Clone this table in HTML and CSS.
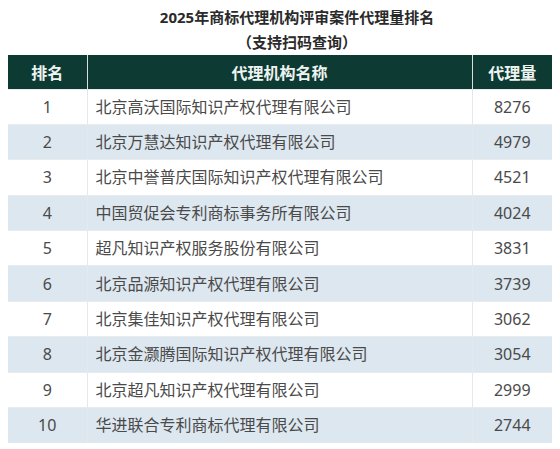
FILE: index.html
```html
<!DOCTYPE html>
<html lang="zh-CN">
<head>
<meta charset="UTF-8" />
<meta name="viewport" content="width=device-width, initial-scale=1" />
<title>2025年商标代理机构评审案件代理量排名</title>
<link rel="stylesheet" href="styles.css">
</head>
<body>

<div class="title">
  <div>2025年商标代理机构评审案件代理量排名</div>
  <div>（支持扫码查询）</div>
</div>

<table class="rank">
  <thead>
    <tr><th class="no">排名</th><th>代理机构名称</th><th class="num">代理量</th></tr>
  </thead>
  <tbody>
    <tr><td class="no">1</td><td class="name">北京高沃国际知识产权代理有限公司</td><td class="num">8276</td></tr>
    <tr><td class="no">2</td><td class="name">北京万慧达知识产权代理有限公司</td><td class="num">4979</td></tr>
    <tr><td class="no">3</td><td class="name">北京中誉普庆国际知识产权代理有限公司</td><td class="num">4521</td></tr>
    <tr><td class="no">4</td><td class="name">中国贸促会专利商标事务所有限公司</td><td class="num">4024</td></tr>
    <tr><td class="no">5</td><td class="name">超凡知识产权服务股份有限公司</td><td class="num">3831</td></tr>
    <tr><td class="no">6</td><td class="name">北京品源知识产权代理有限公司</td><td class="num">3739</td></tr>
    <tr><td class="no">7</td><td class="name">北京集佳知识产权代理有限公司</td><td class="num">3062</td></tr>
    <tr><td class="no">8</td><td class="name">北京金灏腾国际知识产权代理有限公司</td><td class="num">3054</td></tr>
    <tr><td class="no">9</td><td class="name">北京超凡知识产权代理有限公司</td><td class="num">2999</td></tr>
    <tr><td class="no">10</td><td class="name">华进联合专利商标代理有限公司</td><td class="num">2744</td></tr>
  </tbody>
</table>

</body>
</html>
```

FILE: styles.css
```css
body {
  margin: 0;
  padding: 5px 8px 0;
  background: #fff;
  font-family: "Noto Sans", "Noto Sans CJK SC", sans-serif;
  color: #4a4a4a;
}
.title {
  text-align: center;
  padding-left: 34px;
  font-size: 15px;
  font-weight: bold;
  line-height: 25px;
  color: #2a2a2a;
}
.rank {
  width: 544px;
  border-collapse: collapse;
  font-size: 16px;
}
.rank th {
  box-sizing: border-box;
  background: #0d3b33;
  color: #eef3f0;
  font-weight: 600;
  height: 34px;
  padding: 0;
  border-left: 1px solid #d8e0dc;
}
.rank th:first-child {
  border-left: none;
}
.rank td {
  box-sizing: border-box;
  height: 35.4px;
  padding: 0;
  line-height: 20px;
  border-left: 1px solid #e6e9ec;
  border-top: 1px solid #e9ecef;
}
.rank td:first-child {
  border-left: none;
}
.rank tbody tr:nth-child(even) td {
  background: #dde7f0;
}
.rank .no {
  width: 79px;
  text-align: center;
}
.rank .num {
  width: 80px;
  text-align: center;
}
.rank .name {
  padding-left: 8px;
}
```
